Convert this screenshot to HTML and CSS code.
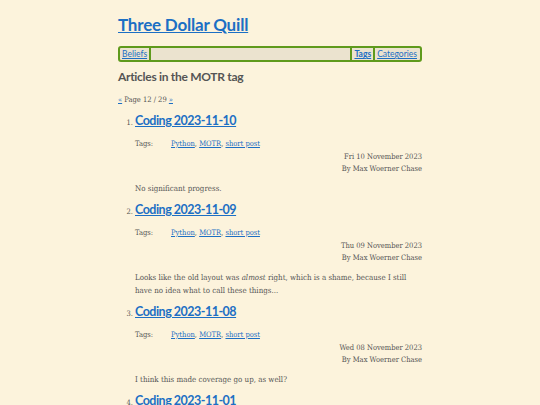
FILE: index.html
```html
<!DOCTYPE html>
<html>
<head>
<meta charset="utf-8">
<link rel="stylesheet" href="styles.css">
</head>
<body>
<div class="page">
  <header>
    <h1 class="site-title"><a href="#">Three Dollar Quill</a></h1>
    <nav class="nav">
      <a class="nav-item" href="#">Beliefs</a>
      <span class="nav-fill"></span>
      <a class="nav-item nav-current" href="#">Tags</a>
      <a class="nav-item nav-last" href="#">Categories</a>
    </nav>
  </header>
  <main>
    <h2 class="tag-heading">Articles in the MOTR tag</h2>
    <p class="pager"><a href="#">«</a> Page 12 / 29 <a href="#">»</a></p>
    <ol class="articles">
      <li class="article">
        <h3 class="article-title"><a href="#">Coding 2023-11-10</a></h3>
        <div class="tags"><span class="tags-label">Tags:</span><span><a href="#">Python</a>, <a href="#">MOTR</a>, <a href="#">short post</a></span></div>
        <div class="meta">Fri 10 November 2023<br>By Max Woerner Chase</div>
        <p class="summary">No significant progress.</p>
      </li>
      <li class="article">
        <h3 class="article-title"><a href="#">Coding 2023-11-09</a></h3>
        <div class="tags"><span class="tags-label">Tags:</span><span><a href="#">Python</a>, <a href="#">MOTR</a>, <a href="#">short post</a></span></div>
        <div class="meta">Thu 09 November 2023<br>By Max Woerner Chase</div>
        <p class="summary">Looks like the old layout was <em>almost</em> right, which is a shame, because I still have no idea what to call these things...</p>
      </li>
      <li class="article">
        <h3 class="article-title"><a href="#">Coding 2023-11-08</a></h3>
        <div class="tags"><span class="tags-label">Tags:</span><span><a href="#">Python</a>, <a href="#">MOTR</a>, <a href="#">short post</a></span></div>
        <div class="meta">Wed 08 November 2023<br>By Max Woerner Chase</div>
        <p class="summary">I think this made coverage go up, as well?</p>
      </li>
      <li class="article">
        <h3 class="article-title"><a href="#">Coding 2023-11-01</a></h3>
        <div class="tags"><span class="tags-label">Tags:</span><span><a href="#">Python</a>, <a href="#">MOTR</a>, <a href="#">short post</a></span></div>
        <div class="meta">Wed 01 November 2023<br>By Max Woerner Chase</div>
        <p class="summary">More progress.</p>
      </li>
    </ol>
  </main>
</div>
</body>
</html>
```
FILE: styles.css
```css
html, body {
  margin: 0;
  padding: 0;
  background: #fcf3dc;
}
body {
  font-family: "DejaVu Serif Condensed", "DejaVu Serif", serif;
  color: #555;
  font-size: 8.5px;
}
a { color: #1c6fc4; }
.page {
  width: 304px;
  margin: 0 auto;
  padding-top: 14px;
}
.site-title {
  font-family: "Lato", sans-serif;
  font-size: 17px;
  letter-spacing: -0.2px;
  font-weight: 700;
  margin: 0 0 10px 0;
  line-height: 22px;
}
.nav {
  display: flex;
  align-items: stretch;
  border: 2px solid #5f9a1c;
  border-radius: 3px;
  background: #ebe3cf;
  font-family: "Lato", sans-serif;
  font-size: 8.5px;
  line-height: 12px;
}
.nav-item {
  padding: 0 2px;
  border-right: 2px solid #5f9a1c;
}
.nav-fill {
  flex: 1;
  border-right: 2px solid #5f9a1c;
}
.nav-current { font-weight: 700; }
.nav-last {
  border-right: none;
  padding-right: 3px;
}
.tag-heading {
  font-family: "Lato", sans-serif;
  font-size: 12px;
  letter-spacing: -0.3px;
  font-weight: 700;
  color: #555;
  margin: 7px 0 0 0;
  line-height: 16px;
}
.pager {
  font-size: 7.5px;
  margin: 10px 0 0 0;
  line-height: 10px;
}
.articles {
  margin: 7px 0 0 0;
  padding-left: 17px;
}
.article {
  font-size: 7.5px;
}
.article-title {
  font-family: "Lato", sans-serif;
  font-size: 12.5px;
  letter-spacing: -0.5px;
  font-weight: 700;
  margin: 0;
  line-height: 18px;
}
.tags {
  display: flex;
  margin-top: 8px;
  line-height: 12px;
}
.tags-label { width: 36px; }
.meta {
  text-align: right;
  line-height: 12px;
  margin-top: 1px;
}
.summary {
  font-size: 7.9px;
  margin: 7px 0 6px 0;
  line-height: 13px;
}
```
